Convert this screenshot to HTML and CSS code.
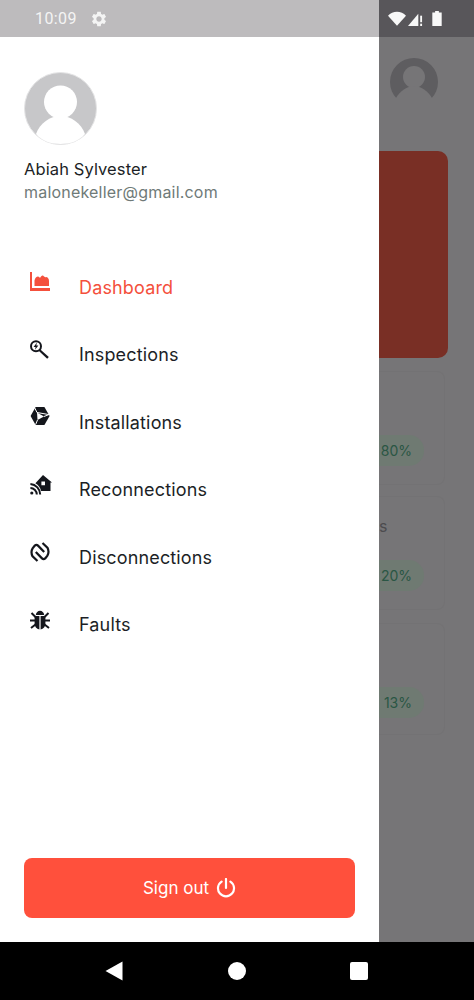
FILE: index.html
```html
<!DOCTYPE html>
<html lang="en">
<head>
    <meta charset="UTF-8">
    <meta name="viewport" content="width=device-width, initial-scale=1.0">
    <title>Dashboard menu</title>
    <link rel="stylesheet" href="styles.css">
</head>
<body>

<div class="status-bar">
    <div class="status-left">
        <span class="status-time">10:09</span>
        <svg class="status-gear" viewBox="0 0 24 24"><path d="M19.14 12.94c.04-.3.06-.61.06-.94 0-.32-.02-.64-.07-.94l2.03-1.58c.18-.14.23-.41.12-.61l-1.92-3.32c-.12-.22-.37-.29-.59-.22l-2.39.96c-.5-.38-1.03-.7-1.62-.94l-.36-2.54c-.04-.24-.24-.41-.48-.41h-3.84c-.24 0-.43.17-.47.41l-.36 2.54c-.59.24-1.13.57-1.62.94l-2.39-.96c-.22-.08-.47 0-.59.22L2.74 8.87c-.12.21-.08.47.12.61l2.03 1.58c-.05.3-.09.63-.09.94s.02.64.07.94l-2.03 1.58c-.18.14-.23.41-.12.61l1.92 3.32c.12.22.37.29.59.22l2.39-.96c.5.38 1.03.7 1.62.94l.36 2.54c.05.24.24.41.48.41h3.84c.24 0 .44-.17.47-.41l.36-2.54c.59-.24 1.13-.56 1.62-.94l2.39.96c.22.08.47 0 .59-.22l1.92-3.32c.12-.22.07-.47-.12-.61l-2.01-1.58zM12 15.6c-1.98 0-3.6-1.62-3.6-3.6s1.62-3.6 3.6-3.6 3.6 1.62 3.6 3.6-1.62 3.6-3.6 3.6z"/></svg>
    </div>
    <div class="status-right">
        <svg class="status-wifi" viewBox="0 0 20 16"><path d="M0 5 C5 -1 15 -1 20 5 L10 16 Z"/></svg>
        <svg class="status-signal" viewBox="0 0 16 16"><path d="M0 16 L11 3 V16 Z"/><rect x="13" y="5" width="2" height="7"/><rect x="13" y="13.5" width="2" height="2.5"/></svg>
        <svg class="status-battery" viewBox="0 0 10 16"><path d="M3 0 H7 V1.5 H10 V16 H0 V1.5 H3 Z"/></svg>
    </div>
</div>

<div class="screen">
    <aside class="drawer">
        <div class="profile">
            <svg class="avatar" viewBox="0 0 73 73">
                <circle cx="36.5" cy="36.5" r="36" fill="#c7c7c9" stroke="#e4e4e5"/>
                <circle cx="36.5" cy="30" r="16.5" fill="#fff"/>
                <path d="M12 62 C16 51 26 44 36.5 44 C47 44 57 51 61 62 C55 69 46 72 36.5 72 C27 72 18 69 12 62 Z" fill="#fff"/>
            </svg>
            <div class="profile-name">Abiah Sylvester</div>
            <div class="profile-email">malonekeller@gmail.com</div>
        </div>

        <nav class="menu">
            <a class="menu-item active">
                <svg class="menu-icon" viewBox="0 0 20 20"><path d="M0 0 H2 V16 H20 V19 H0 Z" /><path d="M4.5 14 V8.5 C5 6 6.5 4.5 8 4.5 C9 4.5 9.5 5.5 10 6 C11 4 12.5 3 13.5 4 C14.5 5 15 5.5 16.5 5 C18 5.5 19 7 19 9 V14 Z"/></svg>
                <span>Dashboard</span>
            </a>
            <a class="menu-item">
                <svg class="menu-icon" viewBox="0 0 20 20"><circle cx="6" cy="6.2" r="5" class="icon-line"/><path d="M6.9 2.6 L3.6 7 H5.6 L5 9.8 L8.4 5.4 H6.3 Z"/><path d="M9.8 9 L18.8 17 L17.2 18.8 L8.4 10.6 Z"/></svg>
                <span>Inspections</span>
            </a>
            <a class="menu-item">
                <svg class="menu-icon" viewBox="0 0 20 20"><path d="M5.6 0 H14.4 L19.6 9 L14.4 18 H5.6 L0.6 9 Z"/><path d="M7 5.5 L14 9.5 L7.5 13 Z" class="icon-cut-fill"/><path d="M4.5 0.4 L7 5.5 M14 9.5 L19.4 7.4 M7.5 13 L5.6 17.6 M7 5.5 L19 7.6" class="icon-cut"/></svg>
                <span>Installations</span>
            </a>
            <a class="menu-item">
                <svg class="menu-icon menu-icon-wide" viewBox="0 0 22 20"><path d="M13 0 L22 7.5 H20.5 V16 H11 C10.6 13 8.6 10 5.4 8.2 Z M11.4 6.6 V10.2 H15 V6.6 Z" fill-rule="evenodd"/><circle cx="1.8" cy="18" r="1.6"/><path d="M0.4 13 A6.6 6.6 0 0 1 6.8 19.6 M0.4 9 A10.6 10.6 0 0 1 10.2 19.6" class="icon-line"/></svg>
                <span>Reconnections</span>
            </a>
            <a class="menu-item">
                <svg class="menu-icon menu-icon-thick" viewBox="0 0 20 20"><path d="M7.5 19 L2.6 14.4 Q0.4 10 2.6 6.4 L4.8 3.6 Q6.4 2 8 3.6 L14.2 10 M12.5 1 L17.4 5.6 Q19.6 10 17.4 13.6 L15.2 16.4 Q13.6 18 12 16.4 L5.8 10" class="icon-line"/></svg>
                <span>Disconnections</span>
            </a>
            <a class="menu-item">
                <svg class="menu-icon" viewBox="0 0 20 20"><path d="M5.8 5 C6 2.5 8 0.8 10 0.8 C12 0.8 14 2.5 14.2 5 Z"/><path d="M4.6 6 H9.4 V19.4 C6.5 19 4.6 16.5 4.6 14 Z M10.6 6 H15.4 V14 C15.4 16.5 13.5 19 10.6 19.4 Z"/><path d="M1.5 3 L5.5 7 M18.5 3 L14.5 7 M0 10.5 H5 M20 10.5 H15 M1 18 L5.5 14.5 M19 18 L14.5 14.5" class="icon-line"/></svg>
                <span>Faults</span>
            </a>
        </nav>

        <button class="sign-out">
            Sign out
            <svg class="sign-out-icon" viewBox="0 0 20 20"><path d="M10 1 V10 M5.6 3.6 A8 8 0 1 0 14.4 3.6"/></svg>
        </button>
    </aside>

    <!-- dimmed dashboard behind the drawer -->
    <div class="backdrop">
        <div class="backdrop-top">
            <svg class="backdrop-avatar" viewBox="0 0 48 48">
                <circle cx="24" cy="24" r="24" fill="#5e5d60"/>
                <circle cx="24" cy="19" r="11" fill="#767577"/>
                <path d="M6 40 C10 33 17 28 24 28 C31 28 38 33 42 40 L42 50 H6 Z" fill="#767577"/>
            </svg>
        </div>
        <div class="banner"></div>
        <div class="stat-card">
            <span class="stat-label">&nbsp;</span>
            <span class="stat-pill">80%</span>
        </div>
        <div class="stat-card stat-card-mid">
            <span class="stat-label">s</span>
            <span class="stat-pill">20%</span>
        </div>
        <div class="stat-card stat-card-last">
            <span class="stat-label">&nbsp;</span>
            <span class="stat-pill">13%</span>
        </div>
    </div>
</div>

<div class="nav-bar">
    <svg class="nav-back" viewBox="0 0 18 20"><path d="M17.5 0.5 V19.5 L0.5 10 Z"/></svg>
    <span class="nav-home"></span>
    <span class="nav-recent"></span>
</div>

</body>
</html>
```

FILE: styles.css
```css
body {
    margin: 0;
    height: 1000px;
    overflow: hidden;
    display: flex;
    flex-direction: column;
    font-family: Inter, "Noto Sans", sans-serif;
    background: #767577;
}
.status-bar {
    display: flex;
    height: 37px;
    flex: none;
}
.status-left {
    width: 379px;
    background: #bdbbbd;
    display: flex;
    align-items: center;
    padding-left: 35px;
    box-sizing: border-box;
}
.status-time {
    font-family: Roboto, sans-serif;
    font-size: 16px;
    color: #f4f4f4;
    letter-spacing: 0.4px;
}
.status-gear {
    width: 18px;
    height: 18px;
    margin-left: 13px;
    fill: #f4f4f4;
}
.status-right {
    flex: 1;
    background: #58565a;
    display: flex;
    align-items: center;
    padding-left: 9px;
}
.status-wifi {
    width: 18px;
    height: 15px;
    fill: #f8f8f8;
}
.status-signal {
    width: 15px;
    height: 15px;
    margin-left: 2px;
    fill: #f8f8f8;
}
.status-battery {
    width: 10px;
    height: 15px;
    margin-left: 9px;
    fill: #f8f8f8;
}
.screen {
    display: flex;
    flex: 1;
    min-height: 0;
}
.drawer {
    width: 379px;
    flex: none;
    background: #fff;
    display: flex;
    flex-direction: column;
    box-sizing: border-box;
    padding: 35px 24px 24px;
}
.avatar {
    width: 73px;
    height: 73px;
    display: block;
}
.profile-name {
    margin-top: 13px;
    font-size: 16.5px;
    line-height: 22px;
    letter-spacing: 0.1px;
    color: #1c1f26;
}
.profile-email {
    margin-top: 1px;
    font-size: 16px;
    line-height: 22px;
    letter-spacing: 0.2px;
    color: #6f7a78;
}
.menu {
    margin-top: 50.5px;
    display: flex;
    flex-direction: column;
}
.menu-item {
    display: flex;
    align-items: center;
    height: 67.5px;
    font-size: 18px;
    letter-spacing: 0.15px;
    color: #1c1f26;
}
.menu-item.active {
    color: #f4503c;
}
.menu-icon {
    width: 20px;
    height: 20px;
    margin: 0 29px 0 6px;
    position: relative;
    top: -5px;
    fill: #14161c;
    flex: none;
}
.menu-icon-wide {
    width: 22px;
    margin-right: 27px;
}
.menu-item.active .menu-icon {
    fill: #f4503c;
}
.icon-line {
    fill: none;
    stroke: #14161c;
    stroke-width: 2;
}
.menu-icon-thick .icon-line {
    stroke-width: 2.2;
}
.icon-cut {
    fill: none;
    stroke: #fff;
    stroke-width: 1;
}
.icon-cut-fill {
    fill: #fff;
}
.sign-out {
    margin-top: auto;
    height: 60px;
    border: none;
    border-radius: 8px;
    background: #ff503c;
    color: #fff;
    font-family: inherit;
    font-size: 17px;
    display: flex;
    align-items: center;
    justify-content: center;
    gap: 7px;
}
.sign-out-icon {
    width: 20px;
    height: 20px;
    fill: none;
    stroke: #fff;
    stroke-width: 2.2;
    stroke-linecap: round;
}
.backdrop {
    flex: 1;
    min-width: 0;
    display: flex;
    flex-direction: column;
}
.backdrop-top {
    height: 114px;
    padding: 21px 0 0 11px;
    box-sizing: border-box;
}
.backdrop-avatar {
    width: 48px;
    height: 48px;
    display: block;
}
.banner {
    width: 69px;
    height: 207px;
    background: #792f25;
    border-radius: 0 10px 10px 0;
}
.stat-card {
    width: 66px;
    height: 114px;
    margin-top: 13px;
    border: solid #737274;
    border-width: 1px 1px 1px 0;
    border-radius: 0 8px 8px 0;
    display: flex;
    flex-direction: column;
    box-sizing: border-box;
}
.stat-card-mid {
    margin-top: 11px;
}
.stat-card-last {
    height: 112px;
}
.stat-label {
    margin-top: 17px;
    height: 24px;
    font-size: 16px;
    line-height: 24px;
    color: #4c4b4e;
}
.stat-pill {
    margin-top: 22px;
    width: 45px;
    height: 31px;
    padding-right: 12px;
    box-sizing: border-box;
    text-align: right;
    background: #6f7a72;
    border-radius: 0 15px 15px 0;
    font-size: 14px;
    line-height: 31px;
    color: #2a5644;
}
.nav-bar {
    height: 58px;
    flex: none;
    background: #000;
    display: flex;
    align-items: center;
    padding-left: 105px;
}
.nav-back {
    width: 18px;
    height: 20px;
    fill: #fff;
}
.nav-home {
    width: 18px;
    height: 18px;
    border-radius: 50%;
    background: #fff;
    margin-left: 105px;
}
.nav-recent {
    width: 18px;
    height: 18px;
    border-radius: 2px;
    background: #fff;
    margin-left: 104px;
}
```
